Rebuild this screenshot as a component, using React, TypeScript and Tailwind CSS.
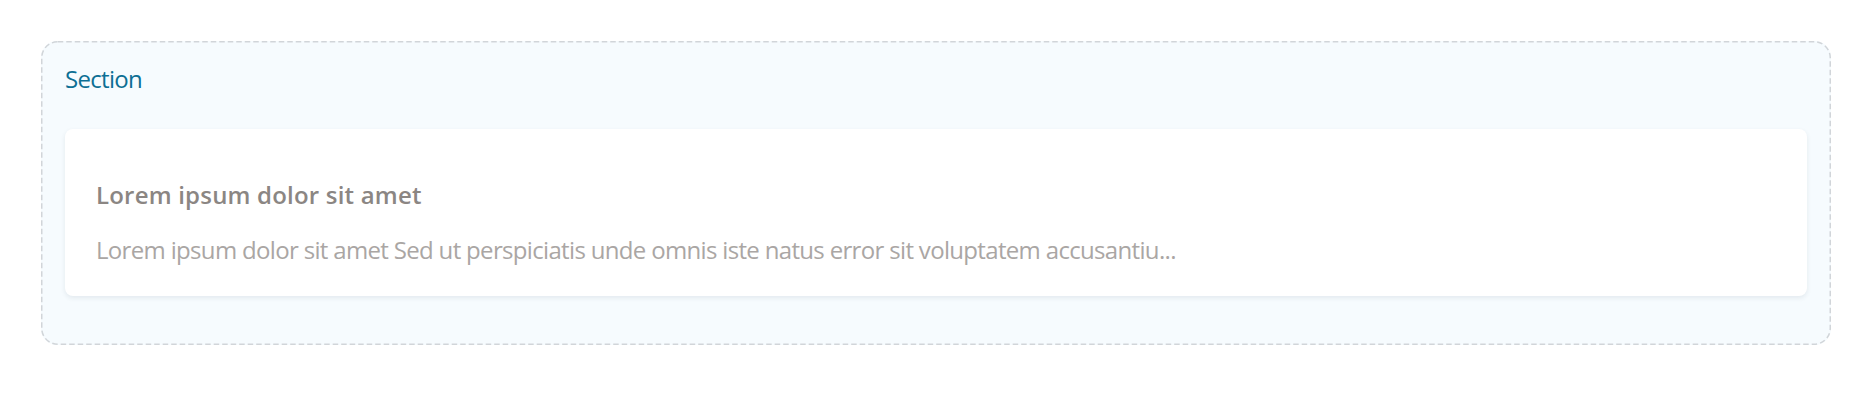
const App = () => {
    return (
        <div
            className="min-h-screen bg-white px-[41px] pt-[41px]"
            style={{ fontFamily: '"Open Sans", "Noto Sans", sans-serif' }}
        >
            <section className="relative rounded-2xl bg-[#f6fbfe] px-6 pt-[22px] pb-[49px]">
                <svg className="pointer-events-none absolute inset-0 h-full w-full overflow-visible">
                    <rect
                        x="0.75"
                        y="0.75"
                        rx="16"
                        className="h-[calc(100%-1.5px)] w-[calc(100%-1.5px)]"
                        fill="none"
                        stroke="#d1d5d9"
                        strokeWidth="1.5"
                        strokeDasharray="5.5 3"
                    />
                </svg>
                <h2 className="text-[24px] leading-8 tracking-[-0.7px] text-[#0d6f94]">Section</h2>
                <div className="mt-[34px] rounded-lg bg-white pl-[31px] pr-8 pt-[50px] pb-[30px] shadow-[0_2px_5px_rgba(30,50,80,0.09)]">
                    <p className="text-[24px] font-semibold leading-8 tracking-[0.2px] text-[#8b8683]">
                        Lorem ipsum dolor sit amet
                    </p>
                    <p className="mt-[23px] text-[24px] leading-8 tracking-[-0.67px] text-[#aaa6a4]">
                        Lorem ipsum dolor sit amet Sed ut perspiciatis unde omnis iste natus error sit voluptatem accusantiu...
                    </p>
                </div>
            </section>
        </div>
    );
};

export default App;
